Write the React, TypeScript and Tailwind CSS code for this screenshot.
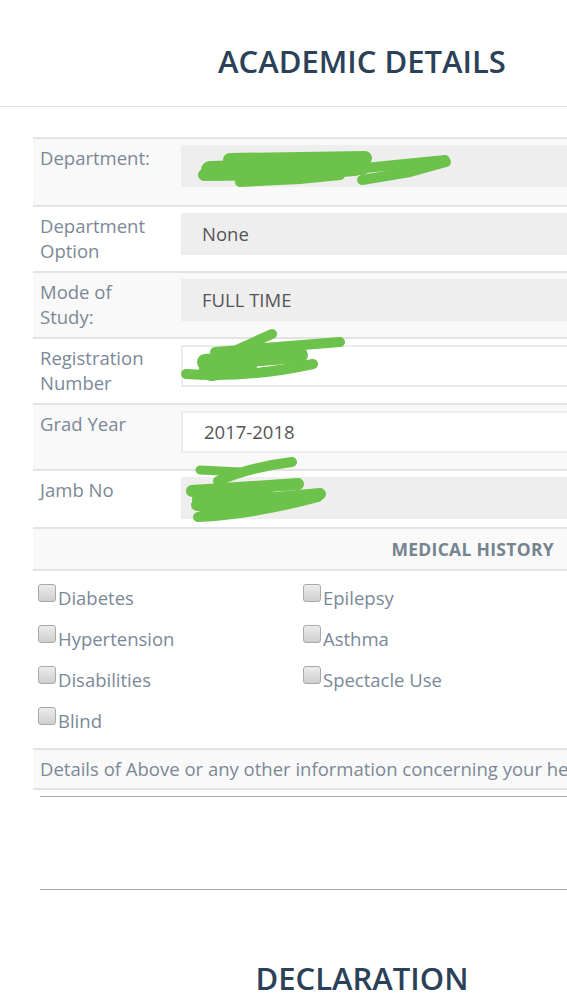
import React from 'react'

// Academic details form (mobile screenshot, content wider than viewport)

interface FieldRow {
  label: string
  value: string
  height: string
  striped: boolean
  readonly: boolean
}

const rows: FieldRow[] = [
  { label: 'Department:', value: '', height: 'h-[68px]', striped: true, readonly: true },
  { label: 'Department Option', value: 'None', height: 'h-[66px]', striped: false, readonly: true },
  { label: 'Mode of Study:', value: 'FULL TIME', height: 'h-[66px]', striped: true, readonly: true },
  { label: 'Registration Number', value: '', height: 'h-[66px]', striped: false, readonly: false },
  { label: 'Grad Year', value: '2017-2018', height: 'h-[66px]', striped: true, readonly: false },
  { label: 'Jamb No', value: '', height: 'h-[58px]', striped: false, readonly: true },
]

const conditions = [
  ['Diabetes', 'Epilepsy'],
  ['Hypertension', 'Asthma'],
  ['Disabilities', 'Spectacle Use'],
  ['Blind', ''],
]

function Checkbox({ label }: { label: string }) {
  if (!label) return <div />
  return (
    <div className="flex items-start h-[41px]">
      <span className="w-[18px] h-[18px] rounded-[3px] border border-[#a9a9a9] bg-gradient-to-b from-[#ececec] to-[#cfcfcf] shrink-0" />
      <span className="ml-[2px] mt-[2px] leading-[24px] text-[18.5px] text-[#7b8897]">{label}</span>
    </div>
  )
}

// green marker scribbles that hide personal data
function Redactions() {
  const stroke = '#6cc24a'
  return (
    <svg
      className="absolute left-0 top-0 pointer-events-none"
      width="567"
      height="998"
      viewBox="0 0 567 998"
      fill="none"
    >
      <g stroke={stroke} strokeLinecap="round" strokeLinejoin="round">
        {/* department */}
        <path d="M230 160 L365 158" strokeWidth="14" />
        <path d="M210 170 L362 166" strokeWidth="18" />
        <path d="M204 175 L300 174 L355 170" strokeWidth="12" />
        <path d="M240 182 L300 179 L340 175" strokeWidth="10" />
        <path d="M362 180 L410 172 L446 162" strokeWidth="10" />
        <path d="M365 168 L445 160" strokeWidth="10" />
        {/* registration */}
        <path d="M186 374 Q250 378 313 364" strokeWidth="10" />
        <path d="M205 362 L300 355" strokeWidth="16" />
        <path d="M215 352 L340 342" strokeWidth="10" />
        <path d="M232 352 L272 334" strokeWidth="10" />
        <path d="M212 368 L245 362" strokeWidth="26" />
        {/* jamb */}
        <path d="M200 470 L240 472" strokeWidth="9" />
        <path d="M218 481 Q250 467 292 462" strokeWidth="10" />
        <path d="M192 491 L298 484" strokeWidth="12" />
        <path d="M197 505 L320 494" strokeWidth="12" />
        <path d="M198 517 Q255 514 318 497" strokeWidth="10" />
        <path d="M205 500 L260 494" strokeWidth="26" />
      </g>
    </svg>
  )
}

export default function App() {
  return (
    <div className="relative w-[567px] h-[998px] overflow-hidden bg-white font-['Open_Sans',sans-serif]">
      <div className="w-[724px]">
        <div className="h-[107px] border-b border-[#e2e2e2] flex items-center justify-center">
          <h1 className="mt-[16px] text-[31px] font-semibold text-[#2b4157]">ACADEMIC DETAILS</h1>
        </div>

        <div className="mx-[33px] mt-[30px]">
          {rows.map((row) => (
            <div
              key={row.label}
              className={`flex border-t-2 border-[#e3e3e3] ${row.height} ${row.striped ? 'bg-[#f9f9f9]' : 'bg-white'}`}
            >
              <div className="w-[148px] pl-[7px] pt-[7px] pr-[20px] text-[18.5px] leading-[24.5px] text-[#7b8897]">
                {row.label}
              </div>
              <div className="flex-1 pt-[6px] pr-[8px]">
                <div
                  className={`h-[42px] flex items-center pl-[21px] text-[18.5px] text-[#555] ${
                    row.readonly ? 'bg-[#eeeeee]' : 'bg-white border-2 border-[#ececec]'
                  }`}
                >
                  {row.value}
                </div>
              </div>
            </div>
          ))}

          {/* medical history header */}
          <div className="h-[42px] border-t-2 border-[#e3e3e3] bg-[#f9f9f9] flex items-center">
            <div className="w-[521px] text-right text-[17.5px] tracking-[0.3px] font-bold text-[#75848f]">MEDICAL HISTORY</div>
          </div>

          <div className="border-t-2 border-[#e3e3e3] bg-white pt-[13px] pl-[5px]">
            {conditions.map((pair, i) => (
              <div key={i} className="grid grid-cols-[265px_1fr]">
                <Checkbox label={pair[0]} />
                <Checkbox label={pair[1]} />
              </div>
            ))}
          </div>

          <div className="h-[42px] border-y-2 border-[#e3e3e3] bg-[#f9f9f9] flex items-center pl-[7px] whitespace-nowrap text-[18.5px] text-[#7b8897]">
            Details of Above or any other information concerning your health
          </div>

          <div className="mx-[7px] mt-[6px] h-[94px] border-y border-[#a9a9a9]" />
        </div>

        <div className="mt-[68px] text-center">
          <h2 className="text-[31px] font-semibold text-[#2b4157] leading-[40px]">DECLARATION</h2>
        </div>
      </div>
      <Redactions />
    </div>
  )
}
